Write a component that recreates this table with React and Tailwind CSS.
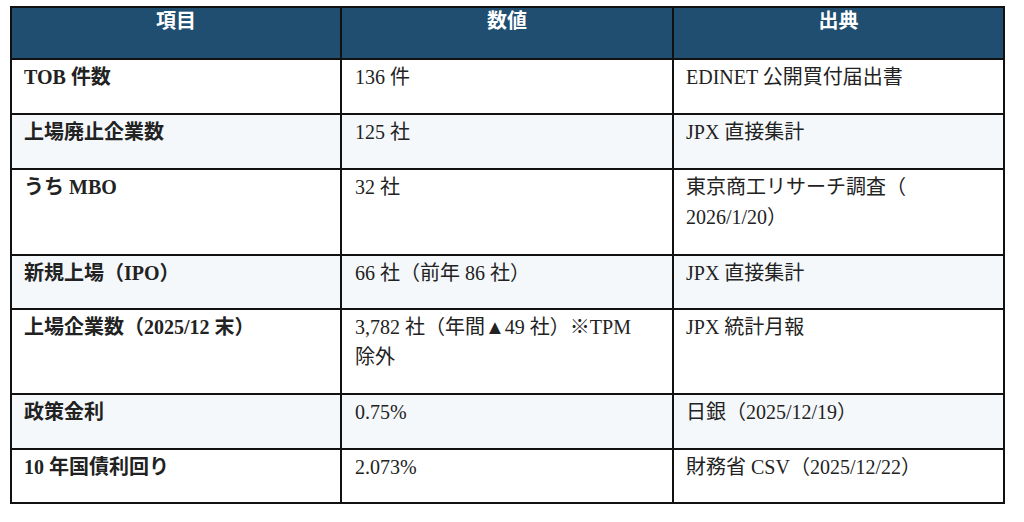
import React from "react";

const rows = [
  ["TOB 件数", "136 件", "EDINET 公開買付届出書"],
  ["上場廃止企業数", "125 社", "JPX 直接集計"],
  ["うち MBO", "32 社", "東京商工リサーチ調査（ 2026/1/20）"],
  ["新規上場（IPO）", "66 社（前年 86 社）", "JPX 直接集計"],
  [
    "上場企業数（2025/12 末）",
    <>
      3,782 社（年間▲49 社）※TPM <span className="whitespace-nowrap">除外</span>
    </>,
    "JPX 統計月報",
  ],
  ["政策金利", "0.75%", "日銀（2025/12/19）"],
  ["10 年国債利回り", "2.073%", "財務省 CSV（2025/12/22）"],
];

const heights = ["h-[55px]", "h-[55px]", "h-[86px]", "h-[54px]", "h-[85px]", "h-[55px]", "h-[54px]"];

export default function App() {
  return (
    <div
      className="w-[1024px] h-[522px] bg-white pt-[6px] pl-[10px]"
      style={{ fontFamily: '"Liberation Serif", "Noto Sans CJK JP", serif' }}
    >
      <table className="w-[993px] border-collapse table-fixed text-[20px] text-[#222]">
        <colgroup>
          <col className="w-[330px]" />
          <col className="w-[332px]" />
          <col className="w-[331px]" />
        </colgroup>
        <thead>
          <tr className="h-[52px] bg-[#1f4e70] text-white">
            {["項目", "数値", "出典"].map((h) => (
              <th
                key={h}
                className="border-2 border-[#111] align-top text-center font-bold pt-0 leading-[26px]"
              >
                {h}
              </th>
            ))}
          </tr>
        </thead>
        <tbody>
          {rows.map((r, i) => (
            <tr key={i} className={`${heights[i]} ${i % 2 === 1 ? "bg-[#f5f8fa]" : "bg-white"}`}>
              <td className="border-2 border-[#111] align-top px-[12px] pt-[2px] leading-[30px] font-bold">
                {r[0]}
              </td>
              <td className="border-2 border-[#111] align-top px-[13px] pt-[2px] leading-[30px]">
                {r[1]}
              </td>
              <td className="border-2 border-[#111] align-top px-[12px] pt-[2px] leading-[30px]">
                {r[2]}
              </td>
            </tr>
          ))}
        </tbody>
      </table>
    </div>
  );
}
